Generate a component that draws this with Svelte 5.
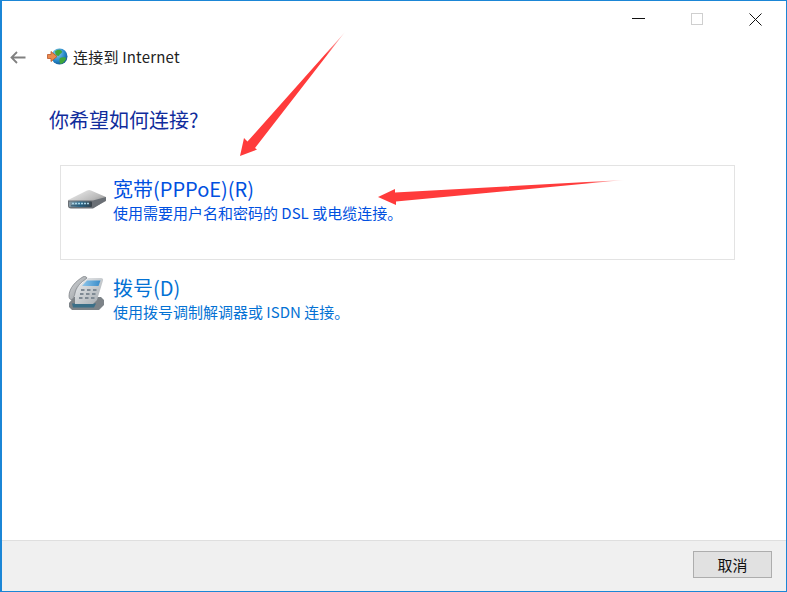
<script>
  const options = [
    { id: 'broadband', title: '宽带(PPPoE)(R)', desc: '使用需要用户名和密码的 DSL 或电缆连接。', active: true },
    { id: 'dialup', title: '拨号(D)', desc: '使用拨号调制解调器或 ISDN 连接。', active: false }
  ];
</script>

<div class="window">
  <div class="titlebar">
    <span class="caption min" aria-label="最小化"></span>
    <span class="caption max" aria-label="最大化"></span>
    <svg class="close" width="13" height="13" viewBox="0 0 13 13"><path d="M.5.5l12 12M12.5.5l-12 12" stroke="#111" stroke-width="1" fill="none"/></svg>
  </div>

  <div class="nav">
    <svg class="back" width="16" height="13" viewBox="0 0 16 13"><path d="M15.500 6.500H1.500M7 1 1.500 6.500 7 12" stroke="#808080" stroke-width="1.800" fill="none"/></svg>
    <svg class="globe" width="21" height="18" viewBox="0 0 21 18">
      <defs>
        <radialGradient id="sea" cx=".35" cy=".3" r=".8"><stop offset="0" stop-color="#8fd0ee"/><stop offset=".6" stop-color="#2486c8"/><stop offset="1" stop-color="#124f86"/></radialGradient>
      </defs>
      <circle cx="12.500" cy="8.500" r="8" fill="url(#sea)"/>
      <path d="M8 3.500c2-2.500 6-2.500 7 0 .5 1.500-2 2-2.500 3.500-.5 1.500-3 1-4-.5zM13 10c2-1 6-1 6 .5S15.500 16 14 16s-2-5-1-6z" fill="#3fa63a"/>
      <path d="M.5 6.500h3.500V3.500l6 5-6 5v-3H.5z" fill="#ec8a4c" stroke="#b9562a" stroke-width=".8"/>
    </svg>
    <span class="wintitle">连接到 Internet</span>
  </div>

  <main class="content">
    <h1>你希望如何连接?</h1>
    <div class="options">
      {#each options as o}
        <div class="option" class:active={o.active}>
          <div class="icon">
            {#if o.id === 'broadband'}
              <svg width="40" height="24" viewBox="0 0 40 24">
                <defs>
                  <linearGradient id="mtop" x1="0" y1="0" x2="1" y2="1"><stop offset="0" stop-color="#f4f4f4"/><stop offset=".55" stop-color="#bcbcbc"/><stop offset="1" stop-color="#707070"/></linearGradient>
                  <linearGradient id="mfront" x1="0" y1="0" x2="1" y2="0"><stop offset="0" stop-color="#8c9ba4"/><stop offset=".5" stop-color="#2f6f92"/><stop offset="1" stop-color="#3a4046"/></linearGradient>
                </defs>
                <path d="M1 12 20 2.500c1.500-.7 3-.7 4 0L39 9v4L26 20H4c-2 0-3-1-3-3z" fill="url(#mtop)"/>
                <path d="M1 12.500h25L39 9v3.500L26 20.500H4c-2 0-3-1-3-3z" fill="#6a6f75"/>
                <rect x="2" y="13.500" width="23" height="5.500" rx="1" fill="url(#mfront)"/>
                <path d="M5 15.500h17" stroke="#a9d4e6" stroke-width="1.400" stroke-dasharray="2 1"/>
                <path d="M4 17.800h19" stroke="#1f4a66" stroke-width=".8"/>
              </svg>
            {:else}
              <svg width="38" height="36" viewBox="0 0 38 36">
                <defs>
                  <linearGradient id="pbody" x1="0" y1="0" x2="1" y2="1"><stop offset="0" stop-color="#eef0f2"/><stop offset="1" stop-color="#a3a9ae"/></linearGradient>
                  <linearGradient id="pscreen" x1="0" y1="0" x2="1" y2="0"><stop offset="0" stop-color="#8ec6ea"/><stop offset="1" stop-color="#3a8cc9"/></linearGradient>
                  <linearGradient id="phand" x1="0" y1="0" x2="1" y2="1"><stop offset="0" stop-color="#d8dadc"/><stop offset="1" stop-color="#8e9398"/></linearGradient>
                </defs>
                <path d="M2 27 7 21h27l3 3v5l-5 5H5l-3-3z" fill="#7d8388"/>
                <path d="M5 27.500h24l-2 4H6z" fill="#3a6f88"/>
                <path d="M8 28V13L21 2h13c1.500 0 2.500 1 2 2.500L30 24l-4 4z" fill="url(#pbody)"/>
                <path d="M20 4.500h13.500l-2 5.500H15z" fill="url(#pscreen)"/>
                <path d="M2 20C2 12 9 5 16 .8c2-.8 3.500 0 4 1.200l-3 2.500C13 7 9 12 8 17c-.5 3-1.500 6-3 6.500-1.800.5-3-1-3-3.500z" fill="url(#phand)" stroke="#74797e" stroke-width=".7"/>
                <g fill="#7f8a94">
                  <rect x="14" y="13" width="3.500" height="2"/><rect x="20" y="13" width="3.500" height="2"/><rect x="26" y="13" width="3.500" height="2"/>
                  <rect x="13" y="17" width="3.500" height="2"/><rect x="19" y="17" width="3.500" height="2"/><rect x="25" y="17" width="3.500" height="2"/>
                  <rect x="12" y="21" width="3.500" height="2"/><rect x="18" y="21" width="3.500" height="2"/><rect x="24" y="21" width="3.500" height="2"/>
                </g>
              </svg>
            {/if}
          </div>
          <div class="text">
            <div class="title">{o.title}</div>
            <div class="desc">{o.desc}</div>
          </div>
        </div>
      {/each}
    </div>
  </main>

  <footer class="footer">
    <button class="cancel">取消</button>
  </footer>

  <svg class="arrows" width="787" height="592" viewBox="0 0 787 592">
    <defs>
      <linearGradient id="fade1" gradientUnits="userSpaceOnUse" x1="345" y1="32" x2="325" y2="55"><stop offset="0" stop-color="#ff3b3b" stop-opacity=".2"/><stop offset="1" stop-color="#ff3b3b"/></linearGradient>
      <linearGradient id="fade2" gradientUnits="userSpaceOnUse" x1="624" y1="180" x2="585" y2="183"><stop offset="0" stop-color="#ff3b3b" stop-opacity=".15"/><stop offset="1" stop-color="#ff3b3b"/></linearGradient>
    </defs>
    <path d="M345 32 255 148 257 149.500 240 156 244 138 247.500 141.500 Z" fill="url(#fade1)"/>
    <path d="M624 180 395 192.500 395 189 378 197 396 205 396 201.500 Z" fill="url(#fade2)"/>
  </svg>
</div>

<style>
  :global(body) { margin: 0; }
  .window {
    position: relative;
    box-sizing: border-box;
    width: 787px;
    height: 592px;
    display: flex;
    flex-direction: column;
    background: #fff;
    border: 1px solid #1b86d6;
    border-left-width: 2px;
    font-family: "Noto Sans CJK SC", "Open Sans", sans-serif;
    overflow: hidden;
  }
  .titlebar {
    height: 35px;
    flex: none;
    display: flex;
    align-items: flex-start;
    padding-left: 630px;
    box-sizing: border-box;
  }
  .caption { display: block; flex: none; }
  .min { width: 13px; height: 1px; background: #111; margin-top: 17px; }
  .max { width: 10px; height: 10px; border: 1px solid #cfcfcf; margin: 12px 0 0 46px; }
  .close { flex: none; margin: 12px 0 0 46px; }
  .nav {
    flex: none;
    height: 44px;
    display: flex;
    align-items: center;
    padding-left: 8px;
    box-sizing: border-box;
    margin-top: -1px;
  }
  .back { flex: none; }
  .globe { flex: none; margin-left: 21px; }
  .wintitle { font-size: 15px; letter-spacing: .2px; color: #222; margin-left: 5px; line-height: 20px; }
  .content { flex: 1; padding: 0 0 0 47px; min-height: 0; }
  h1 {
    margin: 27px 0 0;
    font-weight: 400;
    font-size: 20px;
    line-height: 28px;
    color: #102c9c;
  }
  .options {
    margin: 31px 0 0 11px;
    width: 675px;
    display: flex;
    flex-direction: column;
    gap: 1px;
  }
  .option {
    box-sizing: border-box;
    height: 95px;
    display: flex;
    border: 1px solid transparent;
    padding: 3px 0 0 6px;
  }
  .option:not(.active) { padding-top: 6px; }
  .option.active { border-color: #e3e3e3; }
  .icon { width: 46px; flex: none; display: flex; align-items: flex-start; }
  .option.active .icon svg { margin-top: 19px; }
  .option:not(.active) .icon svg { margin-top: 8px; }
  .text { color: #0050e0; padding-top: 6px; }
  .option:not(.active) .text { color: #0472d4; }
  .title { font-size: 20px; line-height: 27px; white-space: nowrap; }
  .desc { font-size: 15px; line-height: 21px; white-space: nowrap; }
  .footer {
    flex: none;
    height: 51px;
    box-sizing: border-box;
    background: #f0f0f0;
    border-top: 1px solid #dfdfdf;
    display: flex;
    justify-content: flex-end;
    padding: 10px 14px 0 0;
  }
  .cancel {
    width: 79px;
    height: 27px;
    box-sizing: border-box;
    border: 1px solid #adadad;
    background: #e1e1e1;
    font-family: inherit;
    font-size: 15px;
    line-height: 22px;
    color: #111;
    padding: 0;
  }
  .arrows { position: absolute; left: -2px; top: -1px; pointer-events: none; }
</style>
